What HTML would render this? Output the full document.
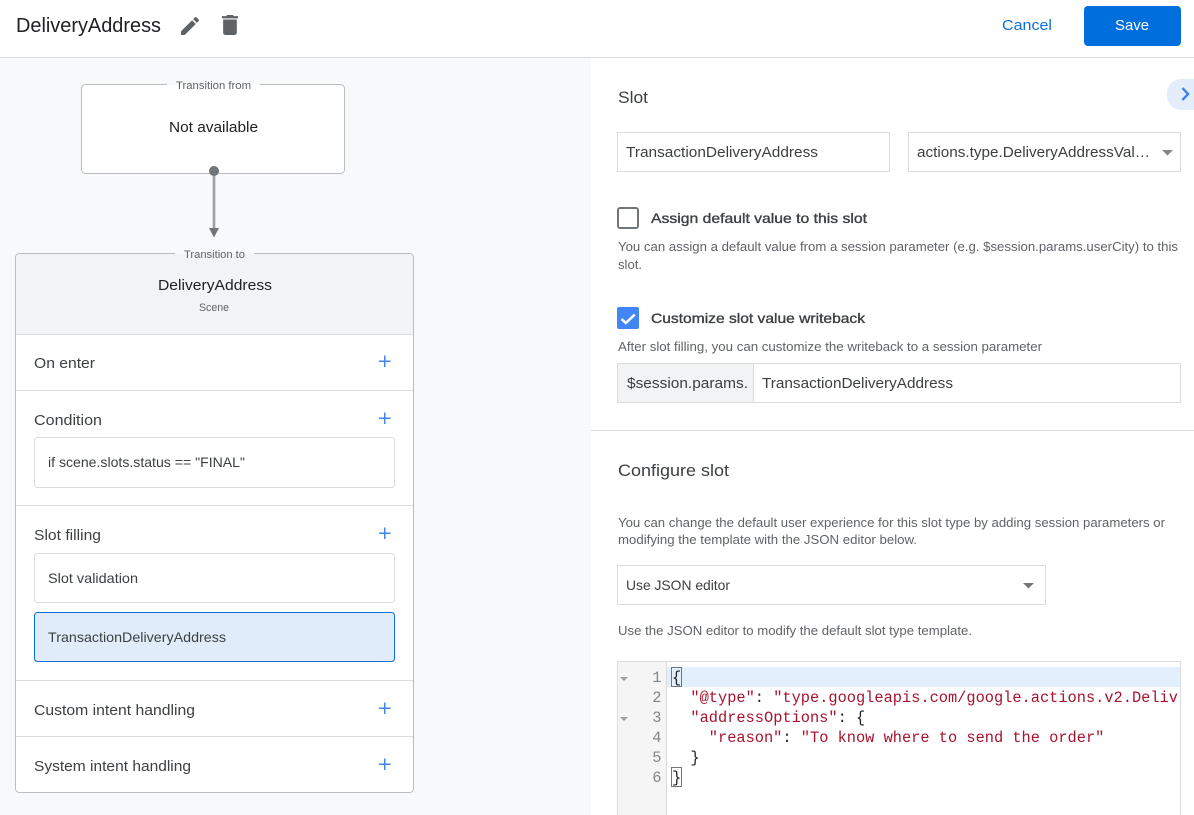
<!DOCTYPE html>
<html lang="en">
<head>
<meta charset="utf-8">
<title>DeliveryAddress</title>
<style>
html,body{margin:0;padding:0;width:1194px;height:815px;overflow:hidden;background:#fff}
svg{display:block}
text{font-family:"Liberation Sans",sans-serif;fill:#202124;white-space:pre}
.s{fill:#3c4043}
.g{fill:#5f6368}
.b{fill:#3c4043;stroke:#3c4043;stroke-width:.35px}
.m{font-family:"Liberation Mono",monospace;font-size:15.33px;white-space:pre}
.r{fill:#a8132e}
.k{fill:#202124}
.n{fill:#80868b;text-anchor:end}
</style>
</head>
<body>
<svg width="1194" height="815" viewBox="0 0 1194 815" xmlns="http://www.w3.org/2000/svg">
<defs><clipPath id="ed"><rect x="667" y="661" width="512" height="154"/></clipPath></defs>
<rect x="0" y="58" width="591" height="757" fill="#f8f9fa"/>
<rect x="0" y="57" width="1194" height="1" fill="#dadce0"/>

<!-- header -->
<text x="16" y="32" font-size="20" textLength="145" lengthAdjust="spacingAndGlyphs">DeliveryAddress</text>
<path transform="translate(178 14)" d="M3 17.25V21h3.75L17.81 9.94l-3.75-3.75L3 17.25zM20.71 7.04a1 1 0 0 0 0-1.41l-2.34-2.34a1 1 0 0 0-1.41 0l-1.83 1.83 3.75 3.75 1.83-1.83z" fill="#5f6368"/>
<path transform="translate(216.3 11.7) scale(1.14 1.11)" d="M6 19c0 1.1.9 2 2 2h8c1.100 0 2-.9 2-2V7H6v12zM19 4h-3.500l-1-1h-5l-1 1H5v2h14V4z" fill="#5f6368"/>
<text x="1002" y="30" font-size="15" style="fill:#0b6fdc" textLength="50" lengthAdjust="spacingAndGlyphs">Cancel</text>
<rect x="1084" y="6" width="97" height="40" rx="4" fill="#006fdd"/>
<text x="1115" y="30" font-size="15" style="fill:#fff" textLength="34" lengthAdjust="spacingAndGlyphs">Save</text>

<!-- transition from -->
<rect x="81.500" y="84.500" width="263" height="89" rx="4" fill="#fff" stroke="#b8bcc0"/>
<rect x="167" y="80" width="93" height="5" fill="#f8f9fa"/>
<rect x="167" y="85" width="93" height="6" fill="#fff"/>
<text x="176" y="89" font-size="11" class="g" textLength="75" lengthAdjust="spacingAndGlyphs">Transition from</text>
<text x="169" y="132" font-size="15" textLength="89" lengthAdjust="spacingAndGlyphs">Not available</text>
<rect x="212.700" y="171" width="2.600" height="58" fill="#9aa0a6"/>
<circle cx="214" cy="171" r="5" fill="#70757a"/>
<path d="M209 228h10l-5 9.500z" fill="#70757a"/>

<!-- transition to card -->
<rect x="15.500" y="253.500" width="398" height="539" rx="4" fill="#fff" stroke="#b8bcc0"/>
<path d="M16 334V257.500a3.500 3.500 0 0 1 3.500-3.500H409.500a3.500 3.500 0 0 1 3.500 3.500V334z" fill="#f1f3f4"/>
<rect x="175" y="250" width="79" height="4" fill="#f8f9fa"/>
<rect x="175" y="254" width="79" height="7" fill="#f1f3f4"/>
<text x="184" y="258" font-size="11" class="g" textLength="61" lengthAdjust="spacingAndGlyphs">Transition to</text>
<text x="158" y="290" font-size="15" textLength="114" lengthAdjust="spacingAndGlyphs">DeliveryAddress</text>
<text x="199" y="311" font-size="11" class="g" textLength="30" lengthAdjust="spacingAndGlyphs">Scene</text>

<g fill="#dadce0">
<rect x="16" y="334" width="397" height="1"/>
<rect x="16" y="390" width="397" height="1"/>
<rect x="16" y="505" width="397" height="1"/>
<rect x="16" y="680" width="397" height="1"/>
<rect x="16" y="736" width="397" height="1"/>
</g>

<text x="34" y="368" font-size="15" class="s" textLength="61" lengthAdjust="spacingAndGlyphs">On enter</text>
<text x="34" y="425" font-size="15" class="s" textLength="68" lengthAdjust="spacingAndGlyphs">Condition</text>
<text x="34" y="540" font-size="15" class="s" textLength="67" lengthAdjust="spacingAndGlyphs">Slot filling</text>
<text x="34" y="715" font-size="15" class="s" textLength="161" lengthAdjust="spacingAndGlyphs">Custom intent handling</text>
<text x="34" y="771" font-size="15" class="s" textLength="157" lengthAdjust="spacingAndGlyphs">System intent handling</text>

<g fill="#4285f4">
<path d="M384 355.500h1.500v5h5v1.500h-5v5H384v-5h-5v-1.500h5z"/>
<path d="M384 412.500h1.500v5h5v1.500h-5v5H384v-5h-5v-1.500h5z"/>
<path d="M384 527.500h1.500v5h5v1.500h-5v5H384v-5h-5v-1.500h5z"/>
<path d="M384 702.500h1.500v5h5v1.500h-5v5H384v-5h-5v-1.500h5z"/>
<path d="M384 758.500h1.500v5h5v1.500h-5v5H384v-5h-5v-1.500h5z"/>
</g>

<rect x="34.500" y="437.500" width="360" height="50" rx="3" fill="#fff" stroke="#dadce0"/>
<text x="48" y="467" font-size="14" class="s" textLength="197" lengthAdjust="spacingAndGlyphs">if scene.slots.status == "FINAL"</text>
<rect x="34.500" y="553.500" width="360" height="49" rx="3" fill="#fff" stroke="#dadce0"/>
<text x="48" y="583" font-size="14" class="s" textLength="90" lengthAdjust="spacingAndGlyphs">Slot validation</text>
<rect x="34.500" y="612.500" width="360" height="49" rx="3" fill="#e1ecfa" stroke="#0b6fdc"/>
<text x="48" y="642" font-size="14" class="s" textLength="178" lengthAdjust="spacingAndGlyphs">TransactionDeliveryAddress</text>

<!-- right panel -->
<text x="618" y="103" font-size="17" class="s" textLength="30" lengthAdjust="spacingAndGlyphs">Slot</text>
<path d="M1194 79h-13a14 14 0 0 0-14 14v3a14 14 0 0 0 14 14h13z" fill="#e3edfb"/>
<path d="M1182.500 88l5.500 6-5.500 6" fill="none" stroke="#3b7fe6" stroke-width="2.400"/>

<rect x="617.500" y="132.500" width="272" height="39" fill="#fff" stroke="#dadce0"/>
<text x="626" y="157" font-size="15" class="s" textLength="192" lengthAdjust="spacingAndGlyphs">TransactionDeliveryAddress</text>
<rect x="908.500" y="132.500" width="272" height="39" fill="#fff" stroke="#dadce0"/>
<text x="917" y="157" font-size="15" class="s" textLength="233" lengthAdjust="spacingAndGlyphs">actions.type.DeliveryAddressVal…</text>
<path d="M1162 150h11l-5.500 5.500z" fill="#80868b"/>

<rect x="618" y="208" width="20" height="20" rx="2" fill="#fff" stroke="#70757a" stroke-width="2"/>
<text x="651" y="223" font-size="14" class="b" textLength="216" lengthAdjust="spacingAndGlyphs">Assign default value to this slot</text>
<text x="618" y="251" font-size="12.500" class="g" textLength="560" lengthAdjust="spacingAndGlyphs">You can assign a default value from a session parameter (e.g. $session.params.userCity) to this</text>
<text x="618" y="269" font-size="12.500" class="g" textLength="24" lengthAdjust="spacingAndGlyphs">slot.</text>

<rect x="617" y="307" width="22" height="22" rx="2" fill="#4285f4"/>
<path d="M621.500 319l4.300 4 9-8.500" fill="none" stroke="#fff" stroke-width="2.500"/>
<text x="651" y="323" font-size="14" class="b" textLength="214" lengthAdjust="spacingAndGlyphs">Customize slot value writeback</text>
<text x="618" y="351" font-size="12.500" class="g" textLength="424" lengthAdjust="spacingAndGlyphs">After slot filling, you can customize the writeback to a session parameter</text>

<rect x="617.500" y="363.500" width="563" height="39" fill="#fff" stroke="#dadce0"/>
<rect x="618" y="364" width="135" height="38" fill="#f1f3f4"/>
<rect x="753" y="364" width="1" height="38" fill="#dadce0"/>
<text x="627" y="388" font-size="15" class="s" textLength="121" lengthAdjust="spacingAndGlyphs">$session.params.</text>
<text x="762" y="388" font-size="15" class="s" textLength="191" lengthAdjust="spacingAndGlyphs">TransactionDeliveryAddress</text>

<rect x="591" y="430" width="603" height="1" fill="#dadce0"/>

<text x="618" y="476" font-size="17" class="s" textLength="111" lengthAdjust="spacingAndGlyphs">Configure slot</text>
<text x="618" y="527" font-size="12.500" class="g" textLength="547" lengthAdjust="spacingAndGlyphs">You can change the default user experience for this slot type by adding session parameters or</text>
<text x="618" y="544" font-size="12.500" class="g" textLength="299" lengthAdjust="spacingAndGlyphs">modifying the template with the JSON editor below.</text>

<rect x="617.500" y="565.500" width="428" height="39" fill="#fff" stroke="#dadce0"/>
<text x="626" y="590" font-size="14" class="s" textLength="104" lengthAdjust="spacingAndGlyphs">Use JSON editor</text>
<path d="M1023 583h11l-5.500 5.500z" fill="#70757a"/>
<text x="618" y="635" font-size="12.500" class="g" textLength="354" lengthAdjust="spacingAndGlyphs">Use the JSON editor to modify the default slot type template.</text>

<!-- editor -->
<rect x="617.500" y="661.500" width="563" height="160" fill="#fff" stroke="#dadce0"/>
<rect x="618" y="662" width="48" height="153" fill="#f5f5f5"/>
<rect x="666" y="662" width="1" height="153" fill="#dadce0"/>
<rect x="667" y="667" width="513" height="20" fill="#e2effc"/>
<path d="M620 677h8l-4 4z" fill="#9aa0a6"/>
<path d="M620 717h8l-4 4z" fill="#9aa0a6"/>
<g class="m">
<text class="m n" x="661.500" y="682">1</text>
<text class="m n" x="661.500" y="702">2</text>
<text class="m n" x="661.500" y="722">3</text>
<text class="m n" x="661.500" y="742">4</text>
<text class="m n" x="661.500" y="762">5</text>
<text class="m n" x="661.500" y="782">6</text>
</g>
<rect x="671.500" y="667.500" width="10" height="19" fill="none" stroke="#70757a"/>
<rect x="671.500" y="767.500" width="10" height="19" fill="none" stroke="#70757a"/>
<g clip-path="url(#ed)">
<text class="m k" x="672" y="682">{</text>
<text class="m k" x="672" y="702" xml:space="preserve">  <tspan class="r">"@type"</tspan>: <tspan class="r">"type.googleapis.com/google.actions.v2.DeliveryAddressValueSpec"</tspan></text>
<text class="m k" x="672" y="722" xml:space="preserve">  <tspan class="r">"addressOptions"</tspan>: {</text>
<text class="m k" x="672" y="742" xml:space="preserve">    <tspan class="r">"reason"</tspan>: <tspan class="r">"To know where to send the order"</tspan></text>
<text class="m k" x="672" y="762" xml:space="preserve">  }</text>
<text class="m k" x="672" y="782">}</text>
</g>
</svg>
</body>
</html>
